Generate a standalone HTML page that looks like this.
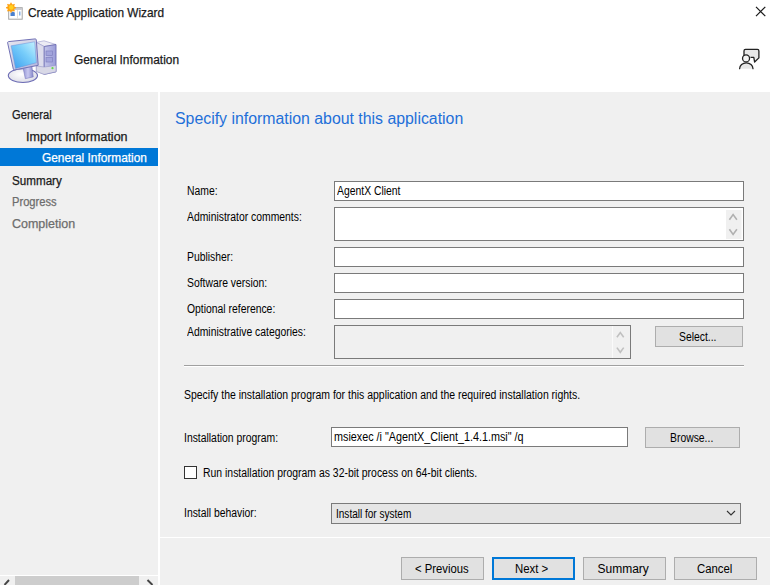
<!DOCTYPE html>
<html><head><meta charset="utf-8">
<style>
html,body{margin:0;padding:0;}
body{width:770px;height:585px;position:relative;overflow:hidden;background:#f0f0f0;font-family:"Liberation Sans",sans-serif;color:#000;}
.a{position:absolute;}
.t{position:absolute;line-height:1;font-size:12px;white-space:nowrap;}
.sg{-webkit-text-stroke:0.25px currentColor;}
.n{transform-origin:0 0;transform:scaleX(0.865);}
.box{position:absolute;background:#fff;border:1px solid #7a7a7a;box-sizing:border-box;}
.btn{position:absolute;background:#e1e1e1;border:1px solid #adadad;box-sizing:border-box;}
</style></head><body>
<!-- header -->
<div class="a" style="left:0;top:0;width:770px;height:92px;background:#fff;"></div>
<!-- title icon -->
<svg class="a" style="left:5px;top:2px" width="20" height="20" viewBox="0 0 20 20">
  <rect x="3.7" y="5.7" width="13.5" height="11.5" fill="#fff" stroke="#a4a4a4"/>
  <rect x="4.2" y="6.2" width="12.5" height="1.6" fill="#c0c0c8"/>
  <path d="M5.5 14 V11 L7.5 9.5 L9.8 10.5 V14 Z" fill="#4a80d0"/>
  <rect x="12" y="8" width="0.8" height="8.5" fill="#d8d8d8"/>
  <rect x="14.2" y="9.5" width="1.2" height="4" fill="#6ea0e0"/>
  <circle cx="6" cy="5.7" r="3.7" fill="#ffa818"/>
  <g stroke="#ffa010" stroke-width="1.5">
    <line x1="6" y1="0.8" x2="6" y2="10.6"/><line x1="1.1" y1="5.7" x2="10.9" y2="5.7"/>
    <line x1="2.5" y1="2.2" x2="9.5" y2="9.2"/><line x1="9.5" y1="2.2" x2="2.5" y2="9.2"/>
  </g>
  <circle cx="6.3" cy="5.4" r="2.3" fill="#ffd020"/>
</svg>
<div class="t sg" style="left:27.7px;top:5.5px;font-size:13px;color:#1a1a1a;"><span style="display:inline-block;transform-origin:0 0;transform:scaleX(0.91)">Create Application Wizard</span></div>
<!-- close X -->
<svg class="a" style="left:754px;top:5px" width="14" height="14" viewBox="0 0 14 14">
  <path d="M2 1.8 L11.3 11.1 M11.3 1.8 L2 11.1" stroke="#1a1a1a" stroke-width="1.2" fill="none"/>
</svg>
<!-- computer icon -->
<svg class="a" style="left:0;top:30px" width="64" height="60" viewBox="0 30 64 60">
  <defs>
    <linearGradient id="scr" x1="1" y1="0" x2="0" y2="1">
      <stop offset="0" stop-color="#c8f4ff"/><stop offset="0.45" stop-color="#78cdfa"/><stop offset="1" stop-color="#3a9cee"/></linearGradient>
    <linearGradient id="bez" x1="0" y1="0" x2="1" y2="1">
      <stop offset="0" stop-color="#e8e8f0"/><stop offset="1" stop-color="#b4b6dc"/></linearGradient>
    <linearGradient id="front" x1="0" y1="0" x2="1" y2="0">
      <stop offset="0" stop-color="#c4c6ea"/><stop offset="1" stop-color="#9a9cd8"/></linearGradient>
    <radialGradient id="basef" cx="0.45" cy="0.4" r="0.7">
      <stop offset="0" stop-color="#ffffff"/><stop offset="0.7" stop-color="#e4e4ec"/><stop offset="1" stop-color="#c0c0d8"/></radialGradient>
    <linearGradient id="neck" x1="0" y1="0" x2="1" y2="0">
      <stop offset="0" stop-color="#8e90d0"/><stop offset="0.5" stop-color="#c8c8f0"/><stop offset="1" stop-color="#8486c8"/></linearGradient>
  </defs>
  <!-- tower -->
  <path d="M36.3 42.4 L44 40.8 L56 44.5 L44.2 46.5 Z" fill="#ececf4" stroke="#9c9ccc" stroke-width="0.6"/>
  <path d="M36.3 42.4 L44.2 46.5 L44.2 74.4 L36.3 71.4 Z" fill="#dcdcec" stroke="#9c9ccc" stroke-width="0.6"/>
  <path d="M44.2 46.5 L56 44.5 L56 71.8 L44.2 74.4 Z" fill="url(#front)" stroke="#6e6eb2" stroke-width="0.9"/>
  <path d="M36.3 66 L44.2 67 L56 65.5 L56 71.8 L44.2 74.4 L36.3 71.4 Z" fill="#d8d8e6" stroke="#8a8ac0" stroke-width="0.5"/>
  <rect x="46" y="51" width="6.5" height="4.6" fill="#a2a4dc" stroke="#7c7cbc" stroke-width="0.6"/>
  <rect x="46" y="57.5" width="6.5" height="4.5" fill="#a2a4dc" stroke="#7c7cbc" stroke-width="0.6"/>
  <circle cx="52.5" cy="68.2" r="1.1" fill="#64d848"/>
  <!-- base -->
  <ellipse cx="22.9" cy="75.6" rx="14.6" ry="6.9" fill="url(#basef)" stroke="#6c6cb4" stroke-width="1.1"/>
  <path d="M22.7 66 L31.6 64 L33.3 76.9 L25.3 78.7 Z" fill="url(#neck)" stroke="#7070b8" stroke-width="0.5"/>
  <!-- monitor -->
  <path d="M7.6 42.7 Q7.6 41.8 8.5 41.6 L35.2 38.9 Q36.2 38.9 36.3 39.9 L38.2 65.3 L14.7 69.9 Q13.6 70.1 13.3 69 Z" fill="url(#bez)" stroke="#7272b6" stroke-width="1"/>
  <path d="M11.1 45.8 L34.7 41.8 L36.4 62.7 L15.6 68.4 Z" fill="url(#scr)" stroke="#6d8fd8" stroke-width="0.5"/>
</svg>
<div class="t sg" style="left:74px;top:54px;color:#1a1a1a;"><span style="display:inline-block;transform-origin:0 0;transform:scaleX(0.99)">General Information</span></div>
<!-- feedback icon -->
<svg class="a" style="left:736px;top:44px" width="28" height="28" viewBox="0 0 28 28">
  <path d="M8 12 V6.9 Q8 5.4 9.5 5.4 H21.4 Q22.9 5.4 22.9 6.9 V13.9 L18.6 18 L17.8 13.4 H14.5 Z" fill="#e8e8e8" stroke="none"/>
  <path d="M8 12 V6.9 Q8 5.4 9.5 5.4 H21.4 Q22.9 5.4 22.9 6.9 V13.9 L18.6 18 L17.8 13.4 H14.5" fill="none" stroke="#222" stroke-width="1.3" stroke-linejoin="round"/>
  <path d="M3.6 24.7 A6.7 5.9 0 0 1 17 24.7 Z" fill="#e8e8e8"/>
  <path d="M3.6 24.7 A6.7 5.9 0 0 1 17 24.7" fill="none" stroke="#222" stroke-width="1.3" stroke-linecap="round"/>
  <circle cx="10.05" cy="14.4" r="3.5" fill="#f4f4f4" stroke="#222" stroke-width="1.3"/>
</svg>

<!-- left nav -->
<div class="a" style="left:158px;top:92px;width:2px;height:493px;background:#fff;"></div>
<div class="t sg" style="left:11.7px;top:108.7px;color:#1a1a1a;"><span style="display:inline-block;transform-origin:0 0;transform:scaleX(0.93)">General</span></div>
<div class="t sg" style="left:26.3px;top:130.6px;color:#1a1a1a;"><span style="display:inline-block;transform-origin:0 0;transform:scaleX(1.043)">Import Information</span></div>
<div class="a" style="left:0;top:148px;width:158px;height:18px;background:#0078d7;"></div>
<div class="t sg" style="left:41.8px;top:152.4px;color:#fff;"><span style="display:inline-block;transform-origin:0 0;transform:scaleX(0.989)">General Information</span></div>
<div class="t sg" style="left:11.5px;top:175px;color:#1a1a1a;"><span style="display:inline-block;transform-origin:0 0;transform:scaleX(0.97)">Summary</span></div>
<div class="t sg" style="left:11.5px;top:196.3px;color:#6d6d6d;"><span style="display:inline-block;transform-origin:0 0;transform:scaleX(0.93)">Progress</span></div>
<div class="t sg" style="left:11.5px;top:218px;color:#6d6d6d;"><span style="display:inline-block;transform-origin:0 0;transform:scaleX(1.04)">Completion</span></div>
<!-- scrollbar -->
<div class="a" style="left:0;top:575px;width:158px;height:1px;background:#fff;"></div>
<div class="a" style="left:15px;top:576px;width:124px;height:9px;background:#cdcdcd;"></div>
<svg class="a" style="left:0;top:576px" width="158" height="9" viewBox="0 0 158 9">
  <path d="M9 4 L4.5 9" stroke="#454545" stroke-width="1.9" fill="none"/>
  <path d="M147.5 4 L152.5 9" stroke="#454545" stroke-width="1.9" fill="none"/>
</svg>

<!-- heading -->
<div class="t" style="left:174.5px;top:111px;font-size:16px;color:#1e6fd9;"><span style="display:inline-block;transform-origin:0 0;transform:scaleX(0.991)">Specify information about this application</span></div>

<!-- form labels -->
<div class="t n" style="left:187px;top:184.9px;">Name:</div>
<div class="t n" style="left:187px;top:211.1px;">Administrator comments:</div>
<div class="t n" style="left:187px;top:250.8px;">Publisher:</div>
<div class="t n" style="left:187px;top:276.6px;">Software version:</div>
<div class="t n" style="left:187px;top:302.8px;">Optional reference:</div>
<div class="t n" style="left:187px;top:325.6px;">Administrative categories:</div>

<!-- fields -->
<div class="box" style="left:334px;top:181px;width:410px;height:20px;"></div>
<div class="t n" style="left:337px;top:185px;">AgentX Client</div>
<div class="box" style="left:334px;top:207px;width:410px;height:34px;"></div>
<svg class="a" style="left:726px;top:210px" width="15.5" height="29" viewBox="0 0 15.5 29">
  <rect x="0" y="0" width="15.5" height="29" fill="#f0f0f0"/>
  <path d="M3.4 9.7 L7.1 4.6 L10.9 9.7" stroke="#b0b0b0" stroke-width="1.6" fill="none"/>
  <path d="M3.4 19.3 L7.1 24.4 L10.9 19.3" stroke="#b0b0b0" stroke-width="1.6" fill="none"/>
</svg>
<div class="box" style="left:334px;top:247px;width:410px;height:20px;"></div>
<div class="box" style="left:334px;top:273px;width:410px;height:20px;"></div>
<div class="box" style="left:334px;top:299px;width:410px;height:20px;"></div>
<div class="box" style="left:334px;top:325px;width:297px;height:34px;background:#f0f0f0;"></div>
<svg class="a" style="left:612px;top:326px" width="18" height="32" viewBox="0 0 18 32">
  <rect x="0" y="0" width="1" height="32" fill="#fafafa"/>
  <path d="M4.9 11.2 L8.3 6.6 L11.7 11.2" stroke="#c0c0c0" stroke-width="1.6" fill="none"/>
  <path d="M4.9 21.6 L8.3 26.3 L11.7 21.6" stroke="#c0c0c0" stroke-width="1.6" fill="none"/>
</svg>
<div class="btn" style="left:655px;top:326px;width:88px;height:21px;"></div>
<div class="t n" style="left:678.5px;top:330.6px;">Select...</div>

<!-- separator -->
<div class="a" style="left:184px;top:365px;width:560px;height:1px;background:#a0a0a0;border-bottom:1px solid #fff;"></div>

<div class="t n" style="left:184px;top:388.6px;transform:scaleX(0.872)">Specify the installation program for this application and the required installation rights.</div>
<div class="t n" style="left:184px;top:431.5px;">Installation program:</div>
<div class="box" style="left:331px;top:427px;width:297px;height:20px;"></div>
<div class="t n" style="left:333.5px;top:430.5px;transform:scaleX(0.9)">msiexec /i "AgentX_Client_1.4.1.msi" /q</div>
<div class="btn" style="left:645px;top:427px;width:95px;height:21px;"></div>
<div class="t n" style="left:669.5px;top:431.6px;">Browse...</div>

<div class="a" style="left:184px;top:466px;width:13px;height:13px;box-sizing:border-box;border:1px solid #333;background:#fff;"></div>
<div class="t n" style="left:203px;top:467px;transform:scaleX(0.869)">Run installation program as 32-bit process on 64-bit clients.</div>

<div class="t n" style="left:184px;top:506.5px;">Install behavior:</div>
<div class="btn" style="left:331px;top:503px;width:410px;height:21px;background:#e5e5e5;border-color:#7a7a7a;"></div>
<div class="t n" style="left:335.5px;top:507.8px;transform:scaleX(0.836)">Install for system</div>
<svg class="a" style="left:724px;top:506px" width="14" height="14" viewBox="0 0 14 14">
  <path d="M3 5 L7 9 L11 5" stroke="#333" stroke-width="1.1" fill="none"/>
</svg>

<!-- bottom -->
<div class="a" style="left:160px;top:537px;width:610px;height:1px;background:#fff;"></div>
<div class="btn" style="left:401px;top:557px;width:83px;height:23px;"></div>
<div class="t" style="left:415px;top:562.8px;transform-origin:0 0;transform:scaleX(0.94)">&lt; Previous</div>
<div class="btn" style="left:492px;top:557px;width:83px;height:23px;border:2px solid #0078d7;"></div>
<div class="t" style="left:515px;top:562.8px;transform-origin:0 0;transform:scaleX(0.95)">Next &gt;</div>
<div class="btn" style="left:583px;top:557px;width:83px;height:23px;"></div>
<div class="t" style="left:597.5px;top:562.8px;">Summary</div>
<div class="btn" style="left:674px;top:557px;width:83px;height:23px;"></div>
<div class="t" style="left:697.3px;top:562.8px;transform-origin:0 0;transform:scaleX(0.946)">Cancel</div>
</body></html>
